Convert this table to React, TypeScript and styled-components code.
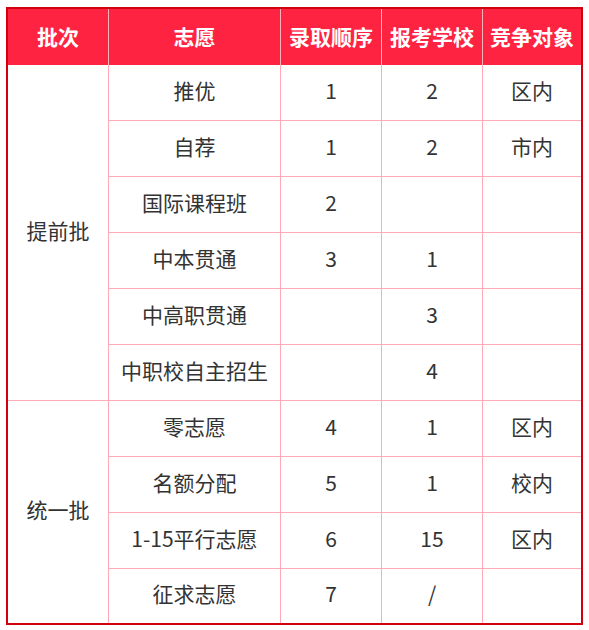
import React from "react";
import styled, { createGlobalStyle } from "styled-components";

const Global = createGlobalStyle`
  html, body { margin: 0; padding: 0; background: #ffffff; }
  body { font-family: "Noto Sans CJK SC", "Noto Sans", sans-serif; }
`;

const Page = styled.div`
  padding: 7px 0 0 6px;
`;

const Grid = styled.div`
  display: grid;
  width: 573px;
  grid-template-columns: 101px 172px 101px 101px 98px;
  grid-template-rows: 56px repeat(9, 56px) 54px;
  border: 2px solid #d0000f;
`;

const HeadCell = styled.div<{ $last?: boolean }>`
  display: flex;
  align-items: center;
  justify-content: center;
  background: #ff2342;
  color: #ffffff;
  font-weight: 700;
  font-size: 21px;
  padding-bottom: 2px;
  border-right: ${(p) => (p.$last ? "none" : "1px solid #ffb3bd")};
  box-sizing: border-box;
`;

const Cell = styled.div<{ $span?: number; $lastCol?: boolean; $lastRow?: boolean }>`
  display: flex;
  align-items: center;
  justify-content: center;
  color: #333333;
  font-size: 21px;
  line-height: 1;
  padding-bottom: 5px;
  box-sizing: border-box;
  border-right: ${(p) => (p.$lastCol ? "none" : "1px solid #ffaab6")};
  border-bottom: ${(p) => (p.$lastRow ? "none" : "1px solid #ffaab6")};
  ${(p) => (p.$span ? `grid-row: span ${p.$span};` : "")}
`;

const headers = ["批次", "志愿", "录取顺序", "报考学校", "竞争对象"];

type Row = [string, string, string, string];

const groups: { name: string; rows: Row[] }[] = [
  {
    name: "提前批",
    rows: [
      ["推优", "1", "2", "区内"],
      ["自荐", "1", "2", "市内"],
      ["国际课程班", "2", "", ""],
      ["中本贯通", "3", "1", ""],
      ["中高职贯通", "", "3", ""],
      ["中职校自主招生", "", "4", ""],
    ],
  },
  {
    name: "统一批",
    rows: [
      ["零志愿", "4", "1", "区内"],
      ["名额分配", "5", "1", "校内"],
      ["1-15平行志愿", "6", "15", "区内"],
      ["征求志愿", "7", "/", ""],
    ],
  },
];

export default function App() {
  return (
    <>
      <Global />
      <Page>
        <Grid>
          {headers.map((h, i) => (
            <HeadCell key={h} $last={i === headers.length - 1}>
              {h}
            </HeadCell>
          ))}
          {groups.map((g, gi) => {
            const lastGroup = gi === groups.length - 1;
            return (
              <React.Fragment key={g.name}>
                <Cell $span={g.rows.length} $lastRow={lastGroup}>
                  {g.name}
                </Cell>
                {g.rows.map((r, ri) => {
                  const lastRow = lastGroup && ri === g.rows.length - 1;
                  return (
                    <React.Fragment key={r[0]}>
                      {r.map((v, ci) => (
                        <Cell key={ci} $lastCol={ci === 3} $lastRow={lastRow}>
                          {v}
                        </Cell>
                      ))}
                    </React.Fragment>
                  );
                })}
              </React.Fragment>
            );
          })}
        </Grid>
      </Page>
    </>
  );
}
